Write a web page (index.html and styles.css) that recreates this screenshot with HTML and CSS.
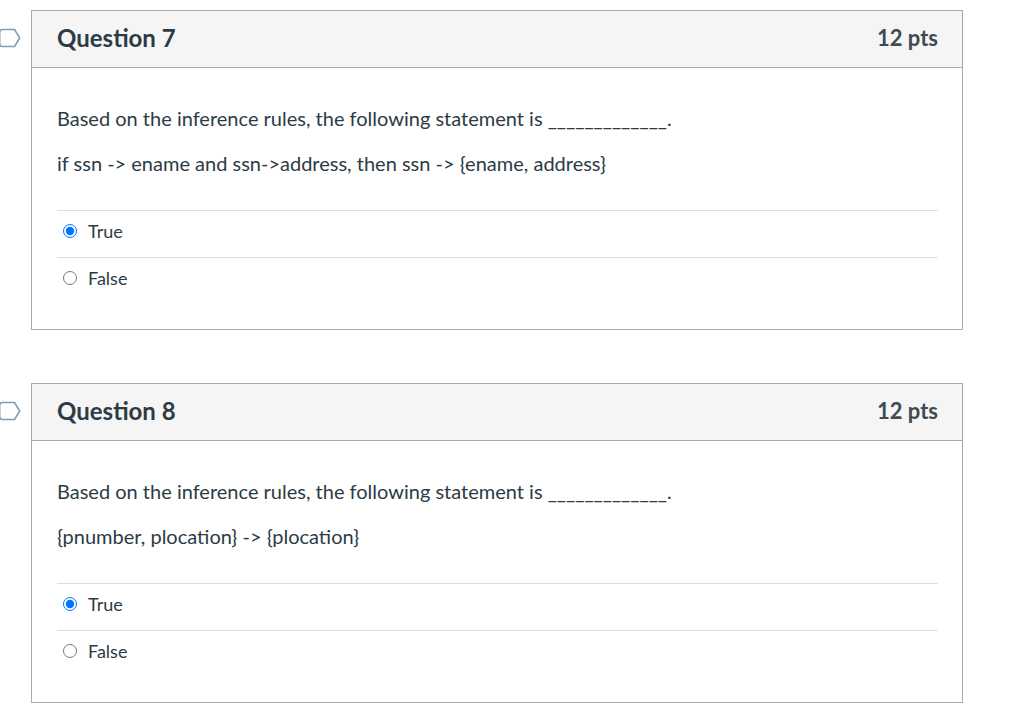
FILE: index.html
```html
<!DOCTYPE html>
<html>
<head>
<meta charset="utf-8">
<link rel="stylesheet" href="styles.css">
</head>
<body>
<div class="page">
  <div class="question">
    <svg class="flag" width="22" height="22" viewBox="0 0 22 22"><path d="M3.5 2.5 H15.5 L20.7 11 L15.5 19.5 H3.5 Q0.7 19.5 0.7 16.5 V5.5 Q0.7 2.5 3.5 2.5 Z" fill="none" stroke="#7f9bb3" stroke-width="1.5" stroke-linejoin="round"/></svg>
    <div class="q-header">
      <span class="q-title">Question 7</span>
      <span class="q-pts">12 pts</span>
    </div>
    <div class="q-body">
      <p class="q-text">Based on the inference rules, the following statement is _____________.</p>
      <p class="q-text">if ssn -&gt; ename and ssn-&gt;address, then ssn -&gt; {ename, address}</p>
      <div class="answers">
        <label class="answer"><input type="radio" name="q7" checked><span>True</span></label>
        <label class="answer"><input type="radio" name="q7"><span>False</span></label>
      </div>
    </div>
  </div>
  <div class="question">
    <svg class="flag" width="22" height="22" viewBox="0 0 22 22"><path d="M3.5 2.5 H15.5 L20.7 11 L15.5 19.5 H3.5 Q0.7 19.5 0.7 16.5 V5.5 Q0.7 2.5 3.5 2.5 Z" fill="none" stroke="#7f9bb3" stroke-width="1.5" stroke-linejoin="round"/></svg>
    <div class="q-header">
      <span class="q-title">Question 8</span>
      <span class="q-pts">12 pts</span>
    </div>
    <div class="q-body">
      <p class="q-text">Based on the inference rules, the following statement is _____________.</p>
      <p class="q-text">{pnumber, plocation} -&gt; {plocation}</p>
      <div class="answers">
        <label class="answer"><input type="radio" name="q8" checked><span>True</span></label>
        <label class="answer"><input type="radio" name="q8"><span>False</span></label>
      </div>
    </div>
  </div>
</div>
</body>
</html>
```

FILE: styles.css
```css
html, body {
  margin: 0;
  padding: 0;
  background: #fff;
}
body {
  font-family: Lato, "Open Sans", sans-serif;
  color: #2d3b45;
}
.page {
  padding: 10px 0 0 31px;
  display: flex;
  flex-direction: column;
  gap: 53px;
}
.question {
  position: relative;
  width: 930px;
  border: 1px solid #aaaaaa;
}
.flag {
  position: absolute;
  left: -33px;
  top: 16px;
}
.q-header {
  height: 56px;
  background: #f5f5f5;
  border-bottom: 1px solid #aaaaaa;
  display: flex;
  align-items: center;
  justify-content: space-between;
  padding: 0 24px 0 25px;
}
.q-title {
  font-size: 24px;
  font-weight: 700;
  color: #2d3b45;
  margin-top: -4px;
}
.q-pts {
  font-size: 22px;
  font-weight: 700;
  color: #3f4a52;
  margin-top: -4px;
}
.q-body {
  padding: 37px 24px 25px 25px;
}
.q-text {
  margin: 0 0 18px 0;
  font-size: 20px;
  line-height: 27px;
}
.answers {
  margin-top: 33px;
}
.answer {
  display: flex;
  align-items: flex-start;
  height: 39px;
  padding-top: 7px;
  border-top: 1px solid #dddddd;
  font-size: 18px;
  line-height: 27px;
}
.answer input {
  margin: 6px 11px 0 6px;
  width: 14px;
  height: 14px;
}
```
